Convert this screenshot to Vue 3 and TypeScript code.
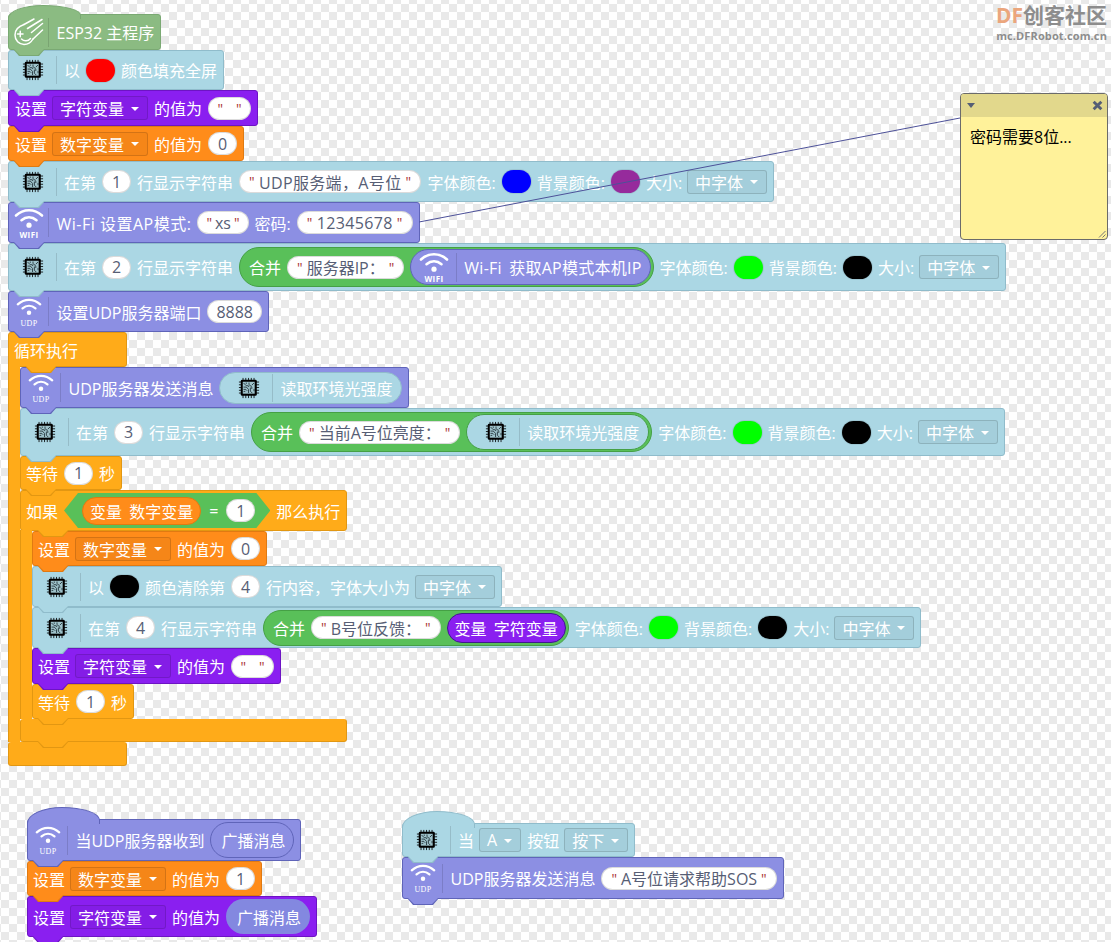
<script setup lang="ts">
interface Link {
    x1: number
    y1: number
    x2: number
    y2: number
}

// comment line from the Wi-Fi password block to the sticky note
const noteLink: Link = { x1: 419, y1: 222, x2: 960, y2: 118 };
</script>

<template>
    <div class="workspace">
        <svg class="defs" width="0" height="0">
            <defs>
                <symbol id="chip" viewBox="0 0 24 24">
                    <path d="M5.500 1v22M8.500 1v22M11.500 1v22M14.500 1v22M17.500 1v22M1 5.500h22M1 8.500h22M1 11.500h22M1 14.500h22M1 17.500h22" stroke="#000" stroke-width="0.9" fill="none" />
                    <rect x="3" y="3" width="17.500" height="17.500" rx="1.500" fill="#000" />
                    <rect x="5.200" y="5.200" width="13" height="13" fill="#9fc3cb" />
                    <path d="M6 6.500l3 3h2.500M9 6v1.500M12 6v2l3 3v2M17.500 6.500l-2.500 2.500M6 11h3l2.500 2.500v4M6 13.500h2.500l1.500 1.500M6 16l2-.5M13.500 11.500v4l2 2M17.500 13v2.500M12.500 9.500l-1.500 1.500" stroke="#1c2c32" stroke-width="0.9" fill="none" />
                </symbol>
                <symbol id="wifi-arcs" viewBox="0 0 30 22">
                    <path d="M2 8.500C9.500 1.500 20.500 1.500 28 8.500" stroke="#fff" stroke-width="2.600" fill="none" stroke-linecap="round" />
                    <path d="M7.500 13.200C12 9.300 18 9.300 22.500 13.200" stroke="#fff" stroke-width="2.600" fill="none" stroke-linecap="round" />
                    <circle cx="15" cy="18.200" r="2.600" fill="#fff" />
                </symbol>
            </defs>
        </svg>

        <!-- main program -->
        <div class="stack main-stack">
            <div class="block hat green h36">
                <div class="cap"></div>
                <div class="icon-slot wifi-slot">
                    <svg class="comet" viewBox="0 0 30 28">
                        <g stroke="#fff" stroke-width="1.500" fill="none" stroke-linecap="round">
                            <path d="M10 6.500C4 8.500 1 12.500 1 17C1 22.500 5 26.500 10 26.500C14 26.500 17 24.500 19 21" />
                            <path d="M10 6.500L20 1M13.500 10.500L28 1.500M17.500 14.500L28.500 5.500M19 21L28.500 12" />
                            <path d="M3.500 16H9M6.250 13.300V18.700" />
                            <path d="M7.500 21C10 23.500 14 23.500 16.500 20.500" />
                        </g>
                    </svg>
                </div>
                <span>ESP32 主程序</span>
            </div>
            <div class="block blue h40">
                <div class="icon-slot"><svg class="chip"><use href="#chip" /></svg></div>
                <span>以</span>
                <i class="swatch red"></i>
                <span>颜色填充全屏</span>
            </div>
            <div class="block purple h36 plain">
                <span>设置</span>
                <div class="drop"><span>字符变量</span><i class="caret"></i></div>
                <span>的值为</span>
                <div class="pill str empty"><b>"</b><b>"</b></div>
            </div>
            <div class="block orange h35 plain">
                <span>设置</span>
                <div class="drop"><span>数字变量</span><i class="caret"></i></div>
                <span>的值为</span>
                <div class="pill num">0</div>
            </div>
            <div class="block blue h41">
                <div class="icon-slot"><svg class="chip"><use href="#chip" /></svg></div>
                <span>在第</span>
                <div class="pill num">1</div>
                <span>行显示字符串</span>
                <div class="pill str spaced"><b>"</b>UDP服务端，A号位<b>"</b></div>
                <span>字体颜色:</span>
                <i class="swatch navy"></i>
                <span>背景颜色:</span>
                <i class="swatch plum"></i>
                <span>大小:</span>
                <div class="drop"><span>中字体</span><i class="caret"></i></div>
            </div>
            <div class="block wifi h41">
                <div class="icon-slot wifi-slot">
                    <svg class="wifi-icon" viewBox="0 0 30 32">
                        <use href="#wifi-arcs" width="30" height="22" />
                        <text x="15" y="30.500" class="wifi-label">WIFI</text>
                    </svg>
                </div>
                <span class="wide">Wi-Fi 设置AP模式:</span>
                <div class="pill str tight"><b>"</b>xs<b>"</b></div>
                <span>密码:</span>
                <div class="pill str spaced"><b>"</b>12345678<b>"</b></div>
            </div>
            <div class="block blue h48">
                <div class="icon-slot"><svg class="chip"><use href="#chip" /></svg></div>
                <span>在第</span>
                <div class="pill num">2</div>
                <span>行显示字符串</span>
                <div class="join">
                    <span>合并</span>
                    <div class="pill str"><b>"</b>服务器IP：<b>"</b></div>
                    <div class="reporter wifi">
                        <div class="icon-slot wifi-slot">
                            <svg class="wifi-icon" viewBox="0 0 30 32">
                                <use href="#wifi-arcs" width="30" height="22" />
                                <text x="15" y="30.500" class="wifi-label">WIFI</text>
                            </svg>
                        </div>
                        <span class="wide-less">Wi-Fi 获取AP模式本机IP</span>
                    </div>
                </div>
                <span>字体颜色:</span>
                <i class="swatch lime"></i>
                <span>背景颜色:</span>
                <i class="swatch black"></i>
                <span>大小:</span>
                <div class="drop"><span>中字体</span><i class="caret"></i></div>
            </div>
            <div class="block wifi h41">
                <div class="icon-slot wifi-slot">
                    <svg class="wifi-icon" viewBox="0 0 30 32">
                        <use href="#wifi-arcs" x="2" y="1" width="26" height="19" />
                        <text x="15" y="30" class="udp-label">UDP</text>
                    </svg>
                </div>
                <span>设置UDP服务器端口</span>
                <div class="pill num">8888</div>
            </div>

            <!-- forever loop -->
            <div class="c-block loop">
                <div class="block amber h35 plain loop-head indent-tab">
                    <span>循环执行</span>
                </div>
                <div class="c-mid">
                    <div class="c-rail amber"></div>
                    <div class="c-body">
                        <div class="block wifi h41">
                            <div class="icon-slot wifi-slot">
                                <svg class="wifi-icon" viewBox="0 0 30 32">
                                    <use href="#wifi-arcs" x="2" y="1" width="26" height="19" />
                                    <text x="15" y="30" class="udp-label">UDP</text>
                                </svg>
                            </div>
                            <span>UDP服务器发送消息</span>
                            <div class="reporter blue light-read">
                                <div class="icon-slot"><svg class="chip"><use href="#chip" /></svg></div>
                                <span>读取环境光强度</span>
                            </div>
                        </div>
                        <div class="block blue h48">
                            <div class="icon-slot"><svg class="chip"><use href="#chip" /></svg></div>
                            <span>在第</span>
                            <div class="pill num">3</div>
                            <span>行显示字符串</span>
                            <div class="join">
                                <span>合并</span>
                                <div class="pill str"><b>"</b>当前A号位亮度：<b>"</b></div>
                                <div class="reporter blue">
                                    <div class="icon-slot"><svg class="chip"><use href="#chip" /></svg></div>
                                    <span>读取环境光强度</span>
                                </div>
                            </div>
                            <span>字体颜色:</span>
                            <i class="swatch lime"></i>
                            <span>背景颜色:</span>
                            <i class="swatch black"></i>
                            <span>大小:</span>
                            <div class="drop"><span>中字体</span><i class="caret"></i></div>
                        </div>
                        <div class="block amber h34 plain">
                            <span>等待</span>
                            <div class="pill num">1</div>
                            <span>秒</span>
                        </div>

                        <!-- if -->
                        <div class="c-block">
                            <div class="block amber h41 plain indent-tab">
                                <span>如果</span>
                                <div class="hex">
                                    <div class="reporter orange var-pill"><span>变量 数字变量</span></div>
                                    <span class="eq">=</span>
                                    <div class="pill num">1</div>
                                </div>
                                <span>那么执行</span>
                            </div>
                            <div class="c-mid">
                                <div class="c-rail amber"></div>
                                <div class="c-body">
                                    <div class="block orange h35 plain">
                                        <span>设置</span>
                                        <div class="drop"><span>数字变量</span><i class="caret"></i></div>
                                        <span>的值为</span>
                                        <div class="pill num">0</div>
                                    </div>
                                    <div class="block blue h41">
                                        <div class="icon-slot"><svg class="chip"><use href="#chip" /></svg></div>
                                        <span>以</span>
                                        <i class="swatch black"></i>
                                        <span>颜色清除第</span>
                                        <div class="pill num">4</div>
                                        <span>行内容，字体大小为</span>
                                        <div class="drop"><span>中字体</span><i class="caret"></i></div>
                                    </div>
                                    <div class="block blue h41">
                                        <div class="icon-slot"><svg class="chip"><use href="#chip" /></svg></div>
                                        <span>在第</span>
                                        <div class="pill num">4</div>
                                        <span>行显示字符串</span>
                                        <div class="join slim">
                                            <span>合并</span>
                                            <div class="pill str"><b>"</b>B号位反馈：<b>"</b></div>
                                            <div class="reporter purple var-pill dark"><span>变量 字符变量</span></div>
                                        </div>
                                        <span>字体颜色:</span>
                                        <i class="swatch lime"></i>
                                        <span>背景颜色:</span>
                                        <i class="swatch black"></i>
                                        <span>大小:</span>
                                        <div class="drop"><span>中字体</span><i class="caret"></i></div>
                                    </div>
                                    <div class="block purple h36 plain">
                                        <span>设置</span>
                                        <div class="drop"><span>字符变量</span><i class="caret"></i></div>
                                        <span>的值为</span>
                                        <div class="pill str empty"><b>"</b><b>"</b></div>
                                    </div>
                                    <div class="block amber h35 plain">
                                        <span>等待</span>
                                        <div class="pill num">1</div>
                                        <span>秒</span>
                                    </div>
                                </div>
                            </div>
                            <div class="block amber c-foot if-foot indent-tab"></div>
                        </div>
                    </div>
                </div>
                <div class="block amber c-foot loop-foot no-tab"></div>
            </div>
        </div>

        <!-- udp receive handler -->
        <div class="stack recv-stack">
            <div class="block hat wifi h42">
                <div class="cap tall"></div>
                <div class="icon-slot wifi-slot">
                    <svg class="wifi-icon" viewBox="0 0 30 32">
                        <use href="#wifi-arcs" x="2" y="1" width="26" height="19" />
                        <text x="15" y="30" class="udp-label">UDP</text>
                    </svg>
                </div>
                <span>当UDP服务器收到</span>
                <div class="reporter wifi arg"><span>广播消息</span></div>
            </div>
            <div class="block orange h35 plain">
                <span>设置</span>
                <div class="drop"><span>数字变量</span><i class="caret"></i></div>
                <span>的值为</span>
                <div class="pill num">1</div>
            </div>
            <div class="block purple h41 plain">
                <span>设置</span>
                <div class="drop"><span>字符变量</span><i class="caret"></i></div>
                <span>的值为</span>
                <div class="reporter wifi arg flat"><span>广播消息</span></div>
            </div>
        </div>

        <!-- button handler -->
        <div class="stack button-stack">
            <div class="block hat blue h34">
                <div class="cap tall"></div>
                <div class="icon-slot"><svg class="chip"><use href="#chip" /></svg></div>
                <span>当</span>
                <div class="drop"><span>A</span><i class="caret"></i></div>
                <span>按钮</span>
                <div class="drop"><span>按下</span><i class="caret"></i></div>
            </div>
            <div class="block wifi h42">
                <div class="icon-slot wifi-slot">
                    <svg class="wifi-icon" viewBox="0 0 30 32">
                        <use href="#wifi-arcs" x="2" y="1" width="26" height="19" />
                        <text x="15" y="30" class="udp-label">UDP</text>
                    </svg>
                </div>
                <span>UDP服务器发送消息</span>
                <div class="pill str"><b>"</b>A号位请求帮助SOS<b>"</b></div>
            </div>
        </div>

        <svg class="note-link" width="1111" height="942">
            <line :x1="noteLink.x1" :y1="noteLink.y1" :x2="noteLink.x2" :y2="noteLink.y2" />
        </svg>

        <div class="note">
            <div class="note-head">
                <i class="note-caret"></i>
                <svg class="note-close" viewBox="0 0 10 10">
                    <path d="M1.500 1.500L8.500 8.500M8.500 1.500L1.500 8.500" />
                </svg>
            </div>
            <div class="note-text">密码需要8位...</div>
            <svg class="note-grip" viewBox="0 0 8 8">
                <path d="M1 7.500L7.500 1M4.500 7.500L7.500 4.500" />
            </svg>
        </div>

        <div class="logo">
            <div class="logo-main"><span class="logo-df">DF</span>创客社区</div>
            <div class="logo-sub">mc.DFRobot.com.cn</div>
        </div>
    </div>
</template>

<style>
body {
    margin: 0;
    background: #fff;
}
</style>

<style scoped>
.workspace {
    position: relative;
    width: 1111px;
    height: 942px;
    overflow: hidden;
    background: repeating-conic-gradient(#e9e9e9 0 25%, #fff 0 50%) -7px 4px / 16px 16px;
    font-family: "Open Sans", "Noto Sans CJK SC", sans-serif;
    font-size: 16px;
    color: #fff;
}

.defs {
    position: absolute;
}

.stack {
    position: absolute;
    display: flex;
    flex-direction: column;
    align-items: flex-start;
}

.main-stack {
    left: 8px;
    top: 14px;
}

.main-stack > .plain {
    padding-left: 6px;
}

.recv-stack {
    left: 27px;
    top: 819px;
}

.button-stack {
    left: 402px;
    top: 823px;
}

/* palette */
.green {
    --fill: #8bbb82;
    --edge: #7aa973;
}

.blue {
    --fill: #abd7e4;
    --edge: #90bccb;
}

.purple {
    --fill: #8a1ff0;
    --edge: #6d14c4;
}

.orange {
    --fill: #ff8c1a;
    --edge: #e07a12;
}

.wifi {
    --fill: #8c8fe3;
    --edge: #5f64b9;
}

.amber {
    --fill: #ffab19;
    --edge: #e29712;
}

/* blocks */
.block {
    position: relative;
    box-sizing: border-box;
    display: flex;
    align-items: center;
    gap: 6px;
    flex: none;
    padding-right: 6px;
    background: var(--fill);
    border: 1px solid var(--edge);
    border-radius: 3px;
    white-space: nowrap;
}

.block::before,
.block::after {
    content: "";
    position: absolute;
    top: 100%;
    clip-path: polygon(0 0, 6px 100%, calc(100% - 6px) 100%, 100% 0);
    z-index: 2;
}

.block::before {
    left: 4px;
    width: 32px;
    height: 7px;
    background: var(--edge);
}

.block::after {
    left: 5px;
    width: 30px;
    height: 6px;
    background: var(--fill);
}

.no-tab::before,
.no-tab::after {
    display: none;
}

.indent-tab::before {
    left: 16px;
}

.indent-tab::after {
    left: 17px;
}

.plain {
    padding-left: 5px;
}

.h34 {
    height: 34px;
}

.h35 {
    height: 35px;
}

.h36 {
    height: 36px;
}

.h40 {
    height: 40px;
}

.h41 {
    height: 41px;
}

.h42 {
    height: 42px;
}

.h48 {
    height: 48px;
}

.cap {
    position: absolute;
    left: -1px;
    top: -10px;
    box-sizing: border-box;
    width: 73px;
    height: 14px;
    background: var(--fill);
    border: 1px solid var(--edge);
    border-bottom: none;
    border-radius: 35px 38px 0 0 / 13px 10px 0 0;
}

.cap.tall {
    top: -13px;
    height: 17px;
    border-radius: 35px 38px 0 0 / 16px 13px 0 0;
}

.icon-slot {
    position: relative;
    box-sizing: border-box;
    display: flex;
    align-items: center;
    justify-content: center;
    flex: none;
    width: 48px;
    height: 28px;
    border-right: 1px solid rgba(0, 0, 0, 0.12);
    margin-right: 1px;
}

.wifi-slot {
    width: 40px;
    height: 29px;
    margin-right: 1.5px;
}

.chip {
    width: 22px;
    height: 22px;
}

.wifi-icon {
    width: 30px;
    height: 32px;
    overflow: visible;
}

.comet {
    width: 30px;
    height: 28px;
}

.wifi-label {
    font: bold 8px "Open Sans", sans-serif;
    letter-spacing: 0.4px;
    fill: #fff;
    text-anchor: middle;
}

.udp-label {
    font: 8px "Liberation Serif", serif;
    letter-spacing: 0.3px;
    fill: #fff;
    text-anchor: middle;
}

.wide {
    letter-spacing: 0.5px;
}

.wide-less {
    letter-spacing: 0.25px;
}

/* inputs */
.swatch {
    display: block;
    flex: none;
    width: 29px;
    height: 23px;
    border-radius: 12px;
    box-shadow: 0 0 0 1px rgba(0, 0, 0, 0.08);
}

.red {
    background: #ff0000;
}

.navy {
    background: #0000ff;
}

.plum {
    background: #962b9c;
}

.lime {
    background: #00ff00;
}

.black {
    background: #000;
}

.drop {
    box-sizing: border-box;
    display: flex;
    align-items: center;
    gap: 4px;
    flex: none;
    height: 24px;
    margin-left: -1px;
    padding: 0 7px;
    background: rgba(0, 0, 0, 0.04);
    border: 1px solid rgba(0, 0, 0, 0.14);
    border-radius: 3px;
}

.caret {
    display: block;
    width: 0;
    height: 0;
    margin: 1px 1px 0 3px;
    border: 4px solid transparent;
    border-top: 4px solid #fff;
    border-bottom: none;
}

.pill {
    box-sizing: border-box;
    display: flex;
    align-items: center;
    justify-content: center;
    flex: none;
    height: 23px;
    background: #fff;
    border: 1px solid rgba(0, 0, 0, 0.14);
    border-radius: 12px;
    color: #575e75;
}

.num {
    min-width: 29px;
    padding: 0 8px;
}

.str {
    gap: 4px;
    padding: 0 9px;
}

.str b {
    font-weight: 400;
    font-size: 14px;
    color: #a33;
}

.spaced {
    letter-spacing: 0.35px;
}

.tight {
    gap: 3px;
    padding: 0 8px;
}

.empty {
    width: 43px;
    gap: 13px;
    padding: 0 6px;
}

/* reporters */
.join {
    box-sizing: border-box;
    display: flex;
    align-items: center;
    gap: 6px;
    flex: none;
    height: 40px;
    padding: 0 2px 0 9px;
    background: #59c059;
    border: 1px solid #45a045;
    border-radius: 20px;
}

.slim {
    height: 36px;
    padding-right: 2px;
}

.reporter {
    box-sizing: border-box;
    display: flex;
    align-items: center;
    gap: 6px;
    flex: none;
    height: 36px;
    padding-right: 9px;
    background: var(--fill);
    border: 1px solid var(--edge);
    border-radius: 18px;
    word-spacing: 3px;
}

.reporter.wifi {
    padding-right: 8px;
}

.reporter .icon-slot {
    width: 53px;
    padding-left: 6px;
}

.reporter .wifi-slot {
    width: 46px;
    padding-left: 0;
    margin-right: 1px;
}

.light-read {
    height: 32px;
}

.join .reporter.blue {
    border-color: #45a045;
}

.var-pill {
    height: 28px;
    padding: 0 7px;
}

.dark {
    height: 30px;
    border-color: #3f1a8c;
}

.arg {
    height: 36px;
    padding: 0 10px;
}

.flat {
    height: 35px;
    border-color: transparent;
    background: #8388e0;
}

/* c-shaped blocks */
.c-block {
    display: flex;
    flex-direction: column;
    align-items: flex-start;
    flex: none;
}

.c-mid {
    display: flex;
    align-items: stretch;
}

.c-rail {
    position: relative;
    flex: none;
    width: 12px;
    margin-top: -1px;
    background: var(--fill);
    border-left: 1px solid var(--edge);
    box-sizing: border-box;
}

.c-body {
    display: flex;
    flex-direction: column;
    align-items: flex-start;
}

.c-foot {
    height: 24px;
    border-top-color: transparent;
}

.loop-head {
    width: 119px;
    border-bottom-left-radius: 0;
}

.loop-foot {
    width: 119px;
}

.if-foot {
    width: 327px;
    height: 23px;
}

/* condition */
.hex {
    position: relative;
    display: flex;
    align-items: center;
    gap: 6px;
    flex: none;
    height: 35px;
    padding: 0 15px 0 18px;
    background: #59c059;
    clip-path: polygon(14px 0, calc(100% - 14px) 0, 100% 50%, calc(100% - 14px) 100%, 14px 100%, 0 50%);
}

.eq {
    padding: 0 2px;
}

/* sticky note */
.note-link {
    position: absolute;
    left: 0;
    top: 0;
    pointer-events: none;
}

.note-link line {
    stroke: #4d5199;
    stroke-width: 1;
}

.note {
    position: absolute;
    left: 960px;
    top: 93px;
    box-sizing: border-box;
    width: 148px;
    height: 147px;
    background: #fff29a;
    border: 1px solid #6b6b6b;
    border-radius: 4px;
    overflow: hidden;
    color: #000;
}

.note-head {
    display: flex;
    align-items: center;
    justify-content: space-between;
    height: 23px;
    padding: 0 4px 0 6px;
    background: #e2d88c;
}

.note-caret {
    display: block;
    width: 0;
    height: 0;
    border: 4px solid transparent;
    border-top: 5px solid #555e75;
    border-bottom: none;
}

.note-close {
    width: 11px;
    height: 11px;
}

.note-close path {
    stroke: #555e75;
    stroke-width: 2.600;
    fill: none;
}

.note-text {
    padding: 8px 9px 0;
    line-height: 24px;
}

.note-grip {
    position: absolute;
    right: 1px;
    bottom: 1px;
    width: 8px;
    height: 8px;
}

.note-grip path {
    stroke: #777;
    stroke-width: 1;
    fill: none;
}

/* forum watermark */
.logo {
    position: absolute;
    right: 4px;
    top: 2px;
    text-align: right;
    color: #8d8d8d;
    font-weight: 700;
}

.logo-main {
    font-size: 21px;
    line-height: 26px;
}

.logo-df {
    color: #eba67d;
}

.logo-sub {
    font-size: 11px;
    line-height: 14px;
    margin-top: 1px;
    letter-spacing: 0.12px;
}
</style>
